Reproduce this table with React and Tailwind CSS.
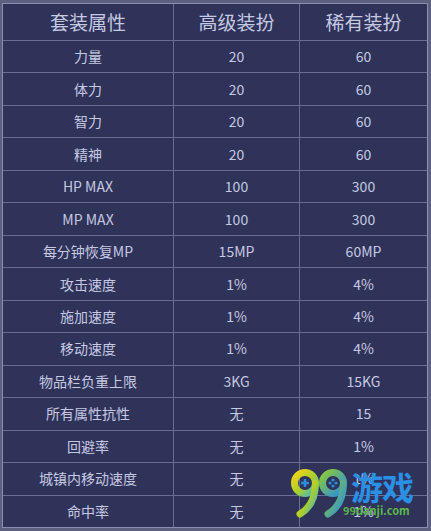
import React from "react";

const rows = [
  ["力量", "20", "60"],
  ["体力", "20", "60"],
  ["智力", "20", "60"],
  ["精神", "20", "60"],
  ["HP MAX", "100", "300"],
  ["MP MAX", "100", "300"],
  ["每分钟恢复MP", "15MP", "60MP"],
  ["攻击速度", "1%", "4%"],
  ["施加速度", "1%", "4%"],
  ["移动速度", "1%", "4%"],
  ["物品栏负重上限", "3KG", "15KG"],
  ["所有属性抗性", "无", "15"],
  ["回避率", "无", "1%"],
  ["城镇内移动速度", "无", "1%"],
  ["命中率", "无", "1%"],
];

const Logo = () => (
  <div className="absolute left-[291px] top-[468px] flex items-start pointer-events-none">
    <svg width="62" height="50" viewBox="0 0 62 50">
      <defs>
        <linearGradient id="g1" x1="0" y1="0" x2="1" y2="1">
          <stop offset="0" stopColor="#f4d21a" />
          <stop offset="0.55" stopColor="#a8cf2c" />
          <stop offset="1" stopColor="#3cb0d8" />
        </linearGradient>
        <linearGradient id="g2" x1="0" y1="0" x2="1" y2="1">
          <stop offset="0" stopColor="#8acb36" />
          <stop offset="1" stopColor="#2a8ee0" />
        </linearGradient>
      </defs>
      <circle cx="14" cy="15" r="10.5" fill="none" stroke="url(#g1)" strokeWidth="7" />
      <path d="M24.5 15 C24.5 30 19 40 9 46" fill="none" stroke="url(#g1)" strokeWidth="7" strokeLinecap="round" />
      <circle cx="42" cy="15" r="10.5" fill="none" stroke="url(#g2)" strokeWidth="7" />
      <path d="M52.5 15 C52.5 30 47 40 37 46" fill="none" stroke="url(#g2)" strokeWidth="7" strokeLinecap="round" />
      <path d="M10 15h8M14 11v8" stroke="#2a8ee0" strokeWidth="2.6" />
      <circle cx="39" cy="15" r="1.6" fill="#2a8ee0" />
      <circle cx="45" cy="15" r="1.6" fill="#2a8ee0" />
      <circle cx="42" cy="12" r="1.6" fill="#2a8ee0" />
      <circle cx="42" cy="18" r="1.6" fill="#2a8ee0" />
    </svg>
    <div className="flex flex-col items-start -ml-[2px]">
      <span className="text-[32px] leading-[36px] font-bold text-[#2a90e6] tracking-[-1px]">游戏</span>
      <span className="text-[11px] leading-[12px] font-bold text-[#5cb84a] -ml-[8px]">99danji.com</span>
    </div>
  </div>
);

export default function App() {
  return (
    <div
      className="relative w-[431px] h-[531px] bg-[#5d6180] pt-[3px] pl-[2px] pr-[3px] pb-[3px] overflow-hidden"
      style={{ fontFamily: '"Microsoft YaHei", "Noto Sans CJK SC", "Noto Sans", sans-serif' }}
    >
      <div className="w-full h-full bg-[#2f3359] border border-[#8a8eb0] flex flex-col text-[#c6c9e3]">
        <div className="flex h-[37px] shrink-0 border-b border-[#686d96] text-[19px]">
          <div className="w-[171px] flex items-center justify-center border-r border-[#686d96]">套装属性</div>
          <div className="w-[126px] flex items-center justify-center border-r border-[#686d96]">高级装扮</div>
          <div className="flex-1 flex items-center justify-center">稀有装扮</div>
        </div>
        {rows.map((r, i) => (
          <div
            key={i}
            className={
              "flex flex-1 text-[14px] " +
              (i < rows.length - 1 ? "border-b border-[#686d96]" : "")
            }
          >
            <div className="w-[171px] flex items-center justify-center border-r border-[#686d96]">{r[0]}</div>
            <div className="w-[126px] flex items-center justify-center border-r border-[#686d96]">{r[1]}</div>
            <div className="flex-1 flex items-center justify-center">{r[2]}</div>
          </div>
        ))}
      </div>
      <Logo />
    </div>
  );
}
